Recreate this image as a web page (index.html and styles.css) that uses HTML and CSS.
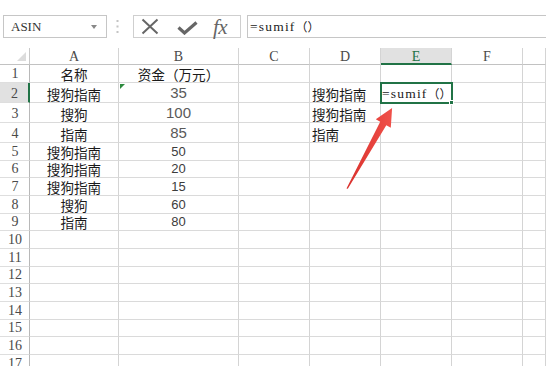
FILE: index.html
```html
<!DOCTYPE html>
<html lang="zh">
<head>
<meta charset="utf-8">
<link rel="stylesheet" href="styles.css">
</head>
<body>
<div class="bar">
  <div class="namebox"><span>ASIN</span><span class="dd"></span></div>
  <svg class="dots" width="3" height="13" viewBox="0 0 3 13"><rect x="0.5" y="0" width="2" height="2" fill="#c4c4c4"/><rect x="0.5" y="5.5" width="2" height="2" fill="#c4c4c4"/><rect x="0.5" y="11" width="2" height="2" fill="#c4c4c4"/></svg>
  <div class="fxbox">
    <svg class="ico-x" width="18" height="17" viewBox="0 0 18 17"><path d="M1.5 1.5 L16.5 15.5 M16.5 1.5 L1.5 15.5" stroke="#666" stroke-width="2" fill="none"/></svg>
    <svg class="ico-ok" width="21" height="14" viewBox="0 0 21 14"><path d="M1.5 6.5 L7.5 12 L19.5 1.5" stroke="#666" stroke-width="3.2" fill="none" stroke-linejoin="miter"/></svg>
    <span class="fx">fx</span>
  </div>
  <div class="formula">=sumif<span class="cjk">（）</span></div>
</div>

<div class="sheet">
  <div class="corner"></div><div class="ch">A</div><div class="ch">B</div><div class="ch">C</div><div class="ch">D</div><div class="ch sel">E</div><div class="ch">F</div><div class="ch"></div>

  <div class="rh">1</div><div class="c cn ctr">名称</div><div class="c cn ctr">资金（万元）</div><div class="c"></div><div class="c"></div><div class="c"></div><div class="c"></div><div class="c"></div>

  <div class="rh sel">2</div><div class="c cn ctr">搜狗指南</div><div class="c num big ctr flag">35</div><div class="c"></div><div class="c cn">搜狗指南</div><div class="c active">=sumif<span class="cjk">（）</span></div><div class="c"></div><div class="c"></div>

  <div class="rh">3</div><div class="c cn ctr">搜狗</div><div class="c num big ctr">100</div><div class="c"></div><div class="c cn">搜狗指南</div><div class="c"></div><div class="c"></div><div class="c"></div>

  <div class="rh">4</div><div class="c cn ctr">指南</div><div class="c num big ctr">85</div><div class="c"></div><div class="c cn">指南</div><div class="c"></div><div class="c"></div><div class="c"></div>

  <div class="rh">5</div><div class="c cn ctr">搜狗指南</div><div class="c num ctr">50</div><div class="c"></div><div class="c"></div><div class="c"></div><div class="c"></div><div class="c"></div>

  <div class="rh">6</div><div class="c cn ctr">搜狗指南</div><div class="c num ctr">20</div><div class="c"></div><div class="c"></div><div class="c"></div><div class="c"></div><div class="c"></div>

  <div class="rh">7</div><div class="c cn ctr">搜狗指南</div><div class="c num ctr">15</div><div class="c"></div><div class="c"></div><div class="c"></div><div class="c"></div><div class="c"></div>

  <div class="rh">8</div><div class="c cn ctr">搜狗</div><div class="c num ctr">60</div><div class="c"></div><div class="c"></div><div class="c"></div><div class="c"></div><div class="c"></div>

  <div class="rh">9</div><div class="c cn ctr">指南</div><div class="c num ctr">80</div><div class="c"></div><div class="c"></div><div class="c"></div><div class="c"></div><div class="c"></div>

  <div class="rh">10</div><div class="c"></div><div class="c"></div><div class="c"></div><div class="c"></div><div class="c"></div><div class="c"></div><div class="c"></div>
  <div class="rh">11</div><div class="c"></div><div class="c"></div><div class="c"></div><div class="c"></div><div class="c"></div><div class="c"></div><div class="c"></div>
  <div class="rh">12</div><div class="c"></div><div class="c"></div><div class="c"></div><div class="c"></div><div class="c"></div><div class="c"></div><div class="c"></div>
  <div class="rh">13</div><div class="c"></div><div class="c"></div><div class="c"></div><div class="c"></div><div class="c"></div><div class="c"></div><div class="c"></div>
  <div class="rh">14</div><div class="c"></div><div class="c"></div><div class="c"></div><div class="c"></div><div class="c"></div><div class="c"></div><div class="c"></div>
  <div class="rh">15</div><div class="c"></div><div class="c"></div><div class="c"></div><div class="c"></div><div class="c"></div><div class="c"></div><div class="c"></div>
  <div class="rh">16</div><div class="c"></div><div class="c"></div><div class="c"></div><div class="c"></div><div class="c"></div><div class="c"></div><div class="c"></div>
  <div class="rh">17</div><div class="c"></div><div class="c"></div><div class="c"></div><div class="c"></div><div class="c"></div><div class="c"></div><div class="c"></div>
</div>

<svg class="arrow" width="546" height="366" viewBox="0 0 546 366">
  <defs>
    <linearGradient id="ag" x1="0" y1="0" x2="1" y2="0">
      <stop offset="0" stop-color="#d9302c"/>
      <stop offset="1" stop-color="#f0514a"/>
    </linearGradient>
  </defs>
  <polygon points="346.5,188.5 380.2,121.8 375.8,119.3 392.1,107.9 390.8,127.7 386.3,125.2 347.8,188.8" fill="url(#ag)"/>
</svg>
</body>
</html>
```

FILE: styles.css
```css
html, body {
  margin: 0;
  padding: 0;
  overflow: hidden;
  background: #fff;
}
body {
  width: 546px;
  height: 366px;
  position: relative;
  font-family: "Liberation Sans", Arial, sans-serif;
}
.bar {
  display: flex;
  align-items: center;
  height: 23px;
  margin-top: 15px;
}
.namebox {
  box-sizing: border-box;
  margin-left: 3px;
  width: 104px;
  height: 23px;
  border: 1px solid #c6c6c6;
  display: flex;
  align-items: center;
  padding-left: 7px;
  font-family: "Liberation Serif", serif;
  font-size: 13px;
  color: #333;
}
.dd {
  margin-left: auto;
  margin-right: 9px;
  width: 0;
  height: 0;
  border-left: 3.5px solid transparent;
  border-right: 3.5px solid transparent;
  border-top: 4px solid #888;
}
.dots {
  margin-left: 9px;
  display: block;
}
.fxbox {
  box-sizing: border-box;
  margin-left: 14px;
  width: 108px;
  height: 23px;
  border: 1px solid #cfcfcf;
  display: flex;
  align-items: center;
  padding-left: 7px;
}
.ico-x { display: block; }
.ico-ok { display: block; margin-left: 18px; margin-top: 2px; }
.fx {
  margin-left: 15px;
  font-family: "Liberation Serif", "Times New Roman", serif;
  font-style: italic;
  font-size: 21px;
  color: #666;
  line-height: 20px;
  letter-spacing: -0.5px;
}
.formula {
  box-sizing: border-box;
  margin-left: 6px;
  flex: 1;
  height: 23px;
  border: 1px solid #c6c6c6;
  border-right: none;
  display: flex;
  align-items: center;
  padding-left: 2px;
  font-family: "Liberation Serif", serif;
  font-size: 13.5px;
  letter-spacing: 1.2px;
  color: #222;
}
.cjk {
  font-family: "Noto Sans CJK SC", sans-serif;
  font-size: 12px;
  letter-spacing: 0;
}

.sheet {
  margin-top: 10px;
  display: grid;
  grid-template-columns: 30px 89px 120px 71px 71px 71px 71px 23px;
  grid-template-rows: 17px 18px 20px 20px 20px repeat(13, 17.67px);
}
.sheet > div {
  box-sizing: border-box;
  min-width: 0;
}
.corner {
  border-right: 1px solid #c8c8c8;
  border-bottom: 1px solid #c2c2c2;
  position: relative;
}
.corner::after {
  content: "";
  position: absolute;
  right: 3px;
  bottom: 3px;
  width: 0;
  height: 0;
  border-left: 9px solid transparent;
  border-bottom: 9px solid #dcdcdc;
}
.ch {
  border-right: 1px solid #d4d4d4;
  border-bottom: 1px solid #c2c2c2;
  display: flex;
  align-items: center;
  justify-content: center;
  font-family: "Liberation Serif", serif;
  font-size: 14px;
  color: #4a4a4a;
  padding-top: 2px;
}
.ch.sel {
  background: #e1e1e1;
  color: #217346;
  border-bottom: 2px solid #217346;
}
.rh {
  border-right: 1px solid #b8b8b8;
  border-bottom: 1px solid #dedede;
  display: flex;
  align-items: flex-end;
  justify-content: center;
  font-family: "Liberation Serif", serif;
  font-size: 14px;
  color: #4a4a4a;
  line-height: 16px;
  padding-left: 1px;
}
.rh.sel {
  background: #e1e1e1;
  border-right: 2px solid #217346;
}
.c {
  border-right: 1px solid #d4d4d4;
  border-bottom: 1px solid #dadada;
  display: flex;
  align-items: flex-end;
  white-space: nowrap;
  padding-left: 2px;
  position: relative;
}
.ctr {
  justify-content: center;
  padding-left: 0;
}
.cn {
  font-family: "Noto Sans CJK SC", sans-serif;
  font-size: 13.6px;
  line-height: 16px;
  color: #1a1a1a;
}
.num {
  font-family: "Liberation Sans", Arial, sans-serif;
  font-size: 13px;
  line-height: 16px;
  color: #3c3c3c;
}
.num.big {
  font-size: 15px;
  line-height: 18px;
  color: #5a5a5a;
}
.flag::before {
  content: "";
  position: absolute;
  left: 1px;
  top: 1px;
  width: 0;
  height: 0;
  border-top: 5px solid #2d8a3e;
  border-right: 5px solid transparent;
}
.active {
  outline: 2px solid #217346;
  outline-offset: -1px;
  padding-left: 1px;
  font-family: "Liberation Serif", serif;
  font-size: 13.5px;
  letter-spacing: 1.2px;
  line-height: 17px;
  color: #1a1a1a;
  z-index: 1;
}
.active::after {
  content: "";
  position: absolute;
  right: -3px;
  bottom: -3px;
  width: 5px;
  height: 5px;
  background: #217346;
  border: 1px solid #fff;
  box-sizing: border-box;
}
.arrow {
  position: absolute;
  left: 0;
  top: 0;
  pointer-events: none;
  z-index: 2;
}
```
